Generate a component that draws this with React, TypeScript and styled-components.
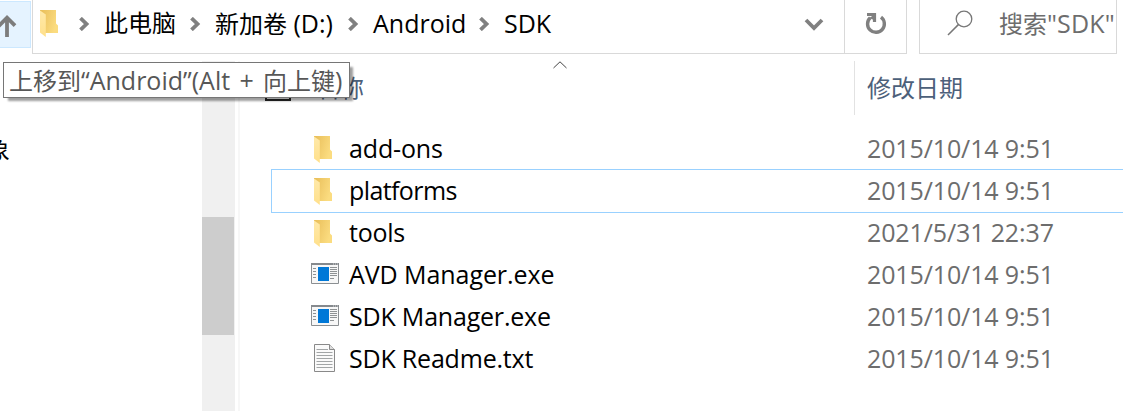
import React from "react";
import styled, { createGlobalStyle } from "styled-components";

const GlobalStyle = createGlobalStyle`
  * { box-sizing: border-box; }
  body { margin: 0; background: #fff; overflow: hidden; }
  svg { display: block; flex: none; }
`;

const Window = styled.div`
  position: relative;
  width: 1123px;
  height: 411px;
  overflow: hidden;
  display: flex;
  flex-direction: column;
  background: #fff;
  color: #000;
  font-family: "Open Sans", "Noto Sans CJK SC", sans-serif;
  font-size: 24px;
  line-height: 36px;
  white-space: pre;
`;

const Latin = styled.span<{ $track?: number; $wordGap?: number }>`
  font-size: 25px;
  letter-spacing: ${(p) => p.$track ?? 0}px;
  word-spacing: ${(p) => p.$wordGap ?? 0}px;
`;

const NavBar = styled.header`
  display: flex;
  height: 61px;
  flex: none;
`;

const UpButton = styled.div`
  width: 31px;
  height: 47px;
  margin: 1px 1px 0 0;
  padding-top: 13px;
  background: #e5f3ff;
  border: 1px solid #cce8ff;
  border-left: 0;
`;

const AddressBar = styled.div`
  display: flex;
  width: 875px;
  height: 54px;
  border: 1px solid #d9d9d9;
  border-top: 0;
`;

const Crumbs = styled.div`
  display: flex;
  flex: 1;
  padding: 0 20px 0 7px;
`;

const CrumbIcon = styled.div`
  width: 38px;
  padding-top: 10px;
`;

const Crumb = styled.div<{ $width: number }>`
  width: ${(p) => p.$width}px;
  padding-top: 5px;
`;

const Separator = styled.div`
  width: 26px;
  padding: 17px 0 0 1px;
`;

const DropDown = styled.div`
  margin-left: auto;
  padding-top: 18px;
`;

const Refresh = styled.div`
  width: 62px;
  padding: 12px 0 0 20px;
  border-left: 1px solid #d9d9d9;
`;

const SearchBox = styled.div`
  display: flex;
  width: 198px;
  height: 54px;
  margin-left: 12px;
  padding: 0 0 0 27px;
  border: 1px solid #d9d9d9;
  border-top: 0;
  color: #6d6d6d;
`;

const SearchIcon = styled.div`
  width: 52px;
  padding-top: 10px;
`;

const SearchText = styled.div`
  padding-top: 5px;
`;

const Body = styled.div`
  display: flex;
  flex: 1;
`;

const TreePane = styled.aside`
  display: flex;
  justify-content: space-between;
  width: 235px;
  overflow: hidden;
`;

const TreeItem = styled.div`
  margin: 71px 0 0 -14px;
`;

const ScrollTrack = styled.div`
  width: 33px;
  padding: 156px 1px 0 0;
  background: #f0f0f0;
`;

const ScrollThumb = styled.div`
  height: 118px;
  background: #cdcdcd;
`;

const FilePane = styled.main`
  flex: 1;
  margin-left: 3px;
  border-left: 2px solid #f7f7f7;
`;

const Header = styled.div`
  display: flex;
  height: 54px;
  margin-bottom: 13px;
  color: #4c607a;
`;

const NameHeader = styled.div`
  display: flex;
  width: 615px;
  padding-left: 25px;
  border-right: 1px solid #e2e2e2;
`;

const SelectAll = styled.div`
  width: 26px;
  height: 26px;
  margin: 14px 25px 0 0;
  border: 2px solid #262626;
`;

const NameLabel = styled.div`
  width: 237px;
  padding-top: 9px;
`;

const SortMark = styled.div`
  padding-top: 0;
`;

const DateHeader = styled.div`
  padding: 9px 0 0 12px;
`;

const Row = styled.div<{ $focused?: boolean }>`
  display: flex;
  height: 42px;
  margin-left: 32px;
  box-shadow: ${(p) => (p.$focused ? "0 0 0 1px #99d1ff" : "none")};
`;

const FileIcon = styled.div<{ $top: number; $left: number }>`
  width: 77px;
  padding: ${(p) => p.$top}px 0 0 ${(p) => p.$left}px;
`;

const FileName = styled.div`
  width: 518px;
  padding-top: 2px;
`;

const FileDate = styled.div`
  padding-top: 2px;
  color: #6d6d6d;
`;

const Tooltip = styled.div`
  position: absolute;
  left: 3px;
  top: 62px;
  width: 347px;
  height: 36px;
  padding-left: 5px;
  border: 1px solid #767676;
  background: #fff;
  color: #575757;
  line-height: 34px;
  box-shadow: 4px 4px 2px -1px rgba(0, 0, 0, 0.38);
`;

const Folder = () => (
  <svg width="20" height="28" viewBox="0 0 20 28">
    <defs>
      <linearGradient id="back" x1="0" y1="0" x2="1" y2="0.4">
        <stop offset="0" stopColor="#e8bd58" />
        <stop offset="1" stopColor="#fbdc80" />
      </linearGradient>
      <linearGradient id="front" x1="0" y1="0" x2="0" y2="1">
        <stop offset="0" stopColor="#ffe9a9" />
        <stop offset="1" stopColor="#ffe08b" />
      </linearGradient>
    </defs>
    <path d="M0 0H16V13.5L18 15.5V23H5L0 20Z" fill="url(#back)" />
    <path d="M0 .5L5.8 4.4V27L0 22.6Z" fill="url(#front)" />
  </svg>
);

const Program = () => (
  <svg width="28" height="21" viewBox="0 0 28 21">
    <path d="M.5 .5H27.5V20.5H.5Z" fill="#f7f7f7" stroke="#8b8f92" />
    <path d="M0 0H28V2H0Z" fill="#85898d" />
    <path d="M22 1H23M24 1H25M26 1H27" stroke="#d5d7d8" />
    <path d="M7 4H18V18H7Z" fill="#0078d7" />
    <path d="M2 5.5H5M2 8.5H5M2 11.5H5M2 14.5H5M19 4.5H26M19 6.5H26M19 8.5H26M19 10.5H26M19 12.5H26M19 15.5H23" stroke="#8e9294" />
  </svg>
);

const TextFile = () => (
  <svg width="22" height="28" viewBox="0 0 22 28">
    <path d="M.5 .5H15.5L20.5 5.5V27.5H.5Z" fill="#fafafa" stroke="#898989" />
    <path d="M15.5 .5V5.5H20.5" fill="#dedede" stroke="#898989" />
    <path d="M2.5 5.5H14M2.5 8.5H18.5M2.5 11.5H18.5M2.5 14.5H18.5M2.5 17.5H18.5M2.5 20.5H18.5M2.5 23.5H18.5" stroke="#a2a5a6" />
  </svg>
);

const Chevron = () => (
  <Separator>
    <svg width="11" height="14" viewBox="0 0 11 14">
      <path d="M1.5 1.2L7.5 7L1.5 12.8" fill="none" stroke="#808080" strokeWidth="3.8" />
    </svg>
  </Separator>
);

const icons = {
  folder: { draw: Folder, top: 8, left: 42 },
  program: { draw: Program, top: 9, left: 39 },
  text: { draw: TextFile, top: 6, left: 42 },
};

type Entry = { name: string; date: string; kind: keyof typeof icons; focused?: boolean; track: number };

const entries: Entry[] = [
  { name: "add-ons", date: "2015/10/14 9:51", kind: "folder", track: -0.15 },
  { name: "platforms", date: "2015/10/14 9:51", kind: "folder", focused: true, track: -0.6 },
  { name: "tools", date: "2021/5/31 22:37", kind: "folder", track: -0.25 },
  { name: "AVD Manager.exe", date: "2015/10/14 9:51", kind: "program", track: -0.07 },
  { name: "SDK Manager.exe", date: "2015/10/14 9:51", kind: "program", track: -0.2 },
  { name: "SDK Readme.txt", date: "2015/10/14 9:51", kind: "text", track: -0.2 },
];

export default function App() {
  return (
    <Window>
      <GlobalStyle />
      <NavBar>
        <UpButton>
          <svg width="17" height="22" viewBox="0 0 17 22">
            <path d="M7 22V3M-2 11.7L7 2.7L15 10.7" fill="none" stroke="#7c7c7c" strokeWidth="3.8" />
          </svg>
        </UpButton>
        <AddressBar>
          <Crumbs>
            <CrumbIcon><Folder /></CrumbIcon>
            <Chevron />
            <Crumb $width={85}>此电脑</Crumb>
            <Chevron />
            <Crumb $width={132}>新加卷<Latin> (D:)</Latin></Crumb>
            <Chevron />
            <Crumb $width={105}><Latin>Android</Latin></Crumb>
            <Chevron />
            <Crumb $width={60}><Latin>SDK</Latin></Crumb>
            <DropDown>
              <svg width="20" height="14" viewBox="0 0 20 14">
                <path d="M2 2L10 10L18 2" fill="none" stroke="#808080" strokeWidth="3.8" />
              </svg>
            </DropDown>
          </Crumbs>
          <Refresh>
            <svg width="22" height="24" viewBox="0 0 22 24">
              <path d="M16 5.2A8.4 8.4 0 1 1 5.2 5.8" fill="none" stroke="#808080" strokeWidth="3.4" />
              <path d="M2 2.5H9.5V10" fill="none" stroke="#808080" strokeWidth="3.2" />
              <path d="M4 6L9 3V8Z" fill="#808080" />
            </svg>
          </Refresh>
        </AddressBar>
        <SearchBox>
          <SearchIcon>
            <svg width="27" height="26" viewBox="0 0 27 26">
              <circle cx="17" cy="9" r="7.8" fill="none" stroke="#777" strokeWidth="1.3" />
              <path d="M11.6 14.4L1 25" stroke="#777" strokeWidth="1.5" />
            </svg>
          </SearchIcon>
          <SearchText>搜索<Latin $track={0.15}>"SDK"</Latin></SearchText>
        </SearchBox>
      </NavBar>
      <Body>
        <TreePane>
          <TreeItem>象</TreeItem>
          <ScrollTrack><ScrollThumb /></ScrollTrack>
        </TreePane>
        <FilePane>
          <Header>
            <NameHeader>
              <SelectAll />
              <NameLabel>名称</NameLabel>
              <SortMark>
                <svg width="14" height="8" viewBox="0 0 14 8">
                  <path d="M.5 7L7 .8L13.5 7" fill="none" stroke="#444" />
                </svg>
              </SortMark>
            </NameHeader>
            <DateHeader>修改日期</DateHeader>
          </Header>
          {entries.map(({ name, date, kind, focused, track }) => {
            const { draw: Icon, top, left } = icons[kind];
            return (
              <Row key={name} $focused={focused}>
                <FileIcon $top={top} $left={left}><Icon /></FileIcon>
                <FileName><Latin $track={track}>{name}</Latin></FileName>
                <FileDate><Latin $track={-0.12}>{date}</Latin></FileDate>
              </Row>
            );
          })}
        </FilePane>
      </Body>
      <Tooltip>上移到<Latin $wordGap={2.8}>“Android”(Alt + </Latin>向上键<Latin>)</Latin></Tooltip>
    </Window>
  );
}
